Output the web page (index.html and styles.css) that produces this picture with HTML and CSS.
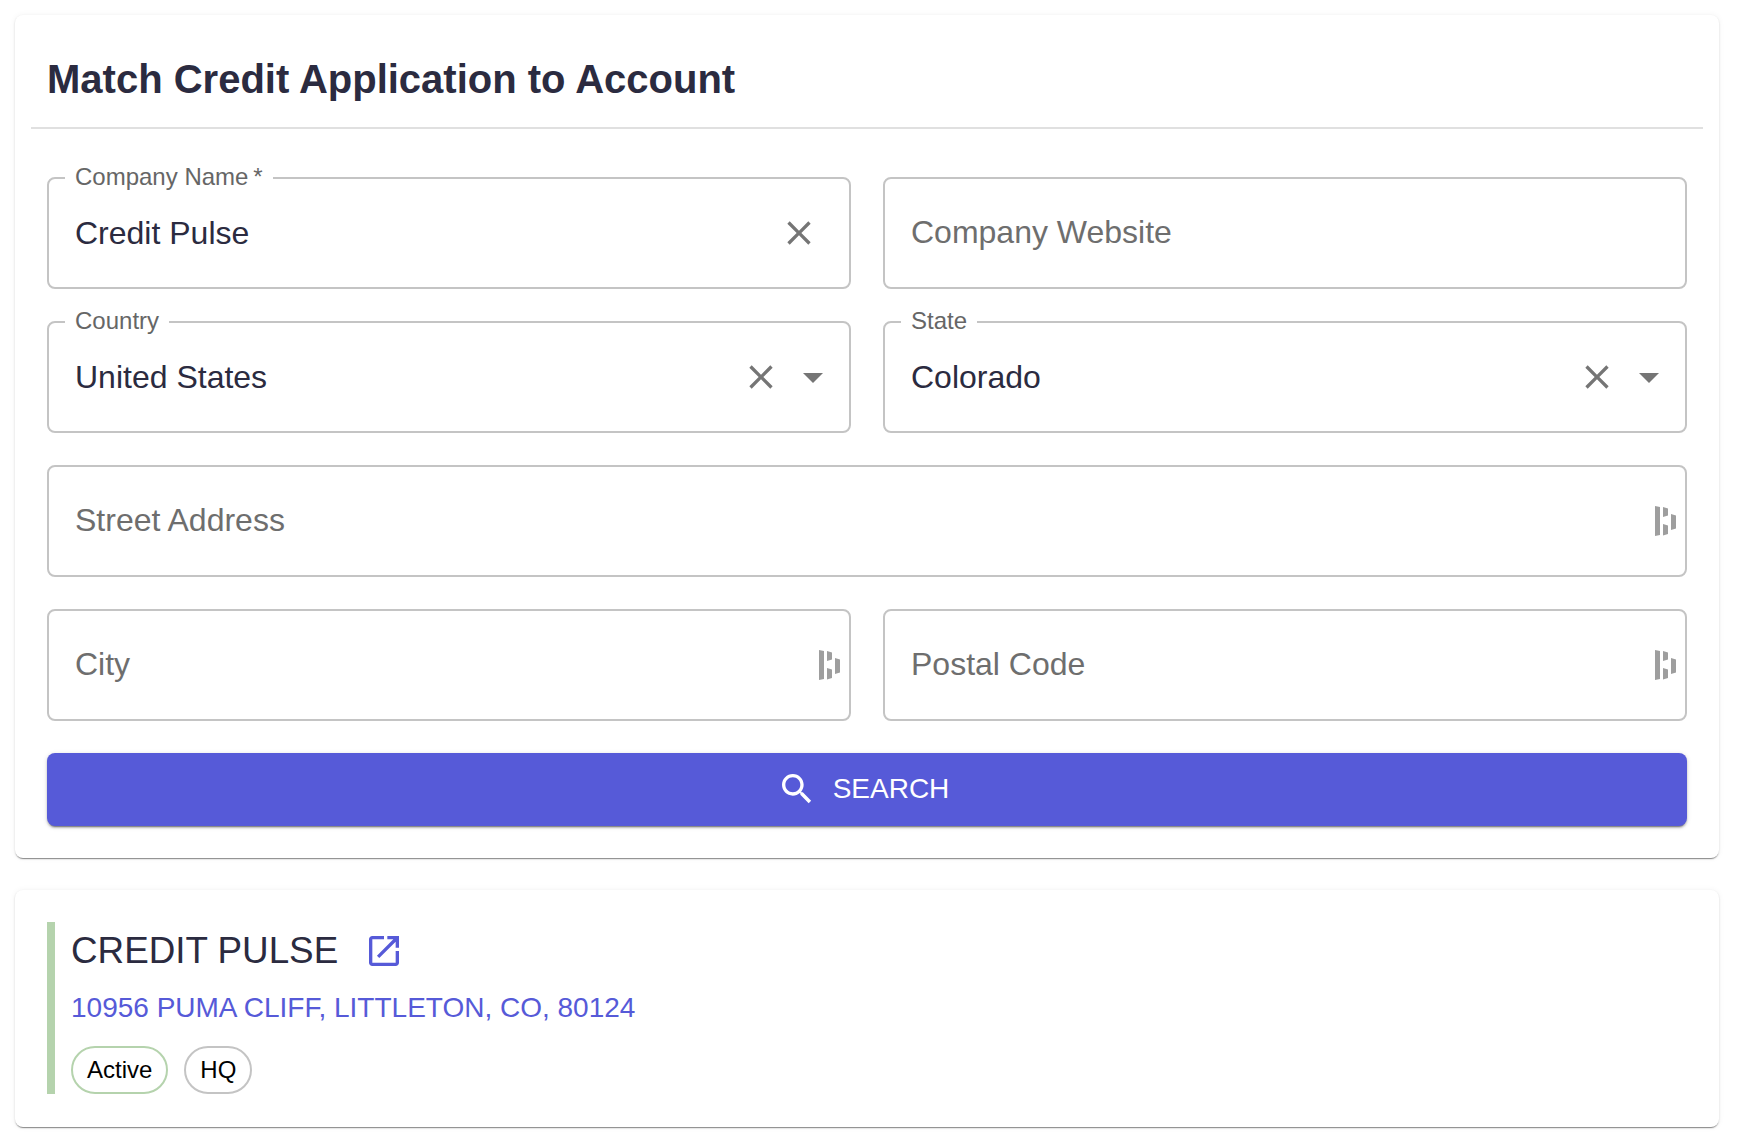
FILE: index.html
```html
<!DOCTYPE html>
<html lang="en">
<head>
<meta charset="utf-8">
<title>Match Credit Application to Account</title>
<link rel="stylesheet" href="styles.css">
</head>
<body>
<main class="page">
  <section class="card form-card">
    <h1 class="title">Match Credit Application to Account</h1>
    <hr class="divider">
    <form class="form-grid">
      <div class="field">
        <span class="label">Company Name&thinsp;*</span>
        <span class="value">Credit Pulse</span>
        <span class="adorn adorn-single">
          <svg class="close" viewBox="0 0 24 24"><path d="M19 6.41 17.59 5 12 10.59 6.41 5 5 6.41 10.59 12 5 17.59 6.41 19 12 13.41 17.59 19 19 17.59 13.41 12z"/></svg>
        </span>
      </div>
      <div class="field">
        <span class="placeholder">Company Website</span>
      </div>
      <div class="field">
        <span class="label">Country</span>
        <span class="value">United States</span>
        <span class="adorn">
          <svg class="close" viewBox="0 0 24 24"><path d="M19 6.41 17.59 5 12 10.59 6.41 5 5 6.41 10.59 12 5 17.59 6.41 19 12 13.41 17.59 19 19 17.59 13.41 12z"/></svg>
          <svg class="arrow" viewBox="0 0 24 24"><path d="M7 10l5 5 5-5z"/></svg>
        </span>
      </div>
      <div class="field">
        <span class="label">State</span>
        <span class="value">Colorado</span>
        <span class="adorn">
          <svg class="close" viewBox="0 0 24 24"><path d="M19 6.41 17.59 5 12 10.59 6.41 5 5 6.41 10.59 12 5 17.59 6.41 19 12 13.41 17.59 19 19 17.59 13.41 12z"/></svg>
          <svg class="arrow" viewBox="0 0 24 24"><path d="M7 10l5 5 5-5z"/></svg>
        </span>
      </div>
      <div class="field field-wide">
        <span class="placeholder">Street Address</span>
        <svg class="dash" viewBox="0 0 21 30"><path d="M0 0l5 1v28l-5 1zM8 1l5 1.500v7L8 11zM8 18l5 1.500v8.500l-5 1.500zM16 8l5 1.500v13L16 24z"/></svg>
      </div>
      <div class="field">
        <span class="placeholder">City</span>
        <svg class="dash" viewBox="0 0 21 30"><path d="M0 0l5 1v28l-5 1zM8 1l5 1.500v7L8 11zM8 18l5 1.500v8.500l-5 1.500zM16 8l5 1.500v13L16 24z"/></svg>
      </div>
      <div class="field">
        <span class="placeholder">Postal Code</span>
        <svg class="dash" viewBox="0 0 21 30"><path d="M0 0l5 1v28l-5 1zM8 1l5 1.500v7L8 11zM8 18l5 1.500v8.500l-5 1.500zM16 8l5 1.500v13L16 24z"/></svg>
      </div>
      <button class="search-btn" type="button">
        <svg class="search-icon" viewBox="0 0 24 24"><path d="M15.500 14h-.79l-.28-.27C15.410 12.590 16 11.110 16 9.500 16 5.910 13.090 3 9.500 3S3 5.910 3 9.500 5.910 16 9.500 16c1.610 0 3.090-.59 4.230-1.570l.27.28v.79l5 4.990L20.490 19l-4.990-5zm-6 0C7.010 14 5 11.990 5 9.500S7.010 5 9.500 5 14 7.010 14 9.500 11.990 14 9.500 14z"/></svg>
        <span>SEARCH</span>
      </button>
    </form>
  </section>

  <section class="card result-card">
    <div class="result">
      <div class="result-head">
        <span class="result-name">CREDIT PULSE</span>
        <svg class="open-icon" viewBox="0 0 24 24"><path d="M19 19H5V5h7V3H5c-1.110 0-2 .9-2 2v14c0 1.100.89 2 2 2h14c1.100 0 2-.9 2-2v-7h-2v7zM14 3v2h3.590l-9.830 9.830 1.410 1.410L19 6.410V10h2V3h-7z"/></svg>
      </div>
      <div class="result-address">10956 PUMA CLIFF, LITTLETON, CO, 80124</div>
      <div class="chips">
        <span class="chip chip-active">Active</span>
        <span class="chip">HQ</span>
      </div>
    </div>
  </section>
</main>
</body>
</html>
```

FILE: styles.css
```css
* { box-sizing: border-box; }
html, body { margin: 0; padding: 0; background: #fff; }
body { font-family: "Liberation Sans", Arial, sans-serif; color: #2b2b40; }
.page { display: flex; flex-direction: column; gap: 32px; padding: 15px 27px 19px 15px; }
.card {
  background: #fff;
  border-radius: 8px;
  box-shadow: 0 2px 1px -1px rgba(0,0,0,.36), 0 1px 2px 0 rgba(0,0,0,.16), 0 0 6px 0 rgba(0,0,0,.05);
}
.form-card { padding: 0 16px 32px; height: 843px; }
.title { margin: 0; padding: 41px 16px 0; height: 112px; font-size: 40px; line-height: 46px; font-weight: 700; }
.divider { margin: 0; height: 2px; border: 0; background: #e0e0e0; }
.form-grid {
  display: grid;
  grid-template-columns: 1fr 1fr;
  gap: 32px;
  padding: 48px 16px 0;
}
.field {
  position: relative;
  display: flex;
  align-items: center;
  height: 112px;
  padding: 0 26px;
  border: 2px solid #c4c4c4;
  border-radius: 8px;
  font-size: 32px;
}
.field-wide, .search-btn { grid-column: 1 / -1; }
.label {
  position: absolute;
  top: -16px;
  left: 16px;
  padding: 0 10px;
  background: #fff;
  font-size: 24px;
  line-height: 28px;
  color: #666;
}
.value { flex: 1; color: #2b2b40; }
.placeholder { flex: 1; padding-bottom: 2px; color: #6e6e6e; }
.adorn { display: flex; align-items: center; gap: 8px; margin-right: -14px; }
.adorn-single { margin-right: 4px; }
.close { width: 40px; height: 40px; fill: #757575; }
.arrow { width: 48px; height: 48px; fill: #757575; }
.dash { position: absolute; right: 9px; top: 39px; width: 21px; height: 30px; fill: #9e9e9e; }
.search-btn {
  display: flex;
  align-items: center;
  justify-content: center;
  gap: 16px;
  height: 73px;
  padding: 0 8px 2px 0;
  border: 0;
  border-radius: 8px;
  background: #565ad8;
  color: #fff;
  font-family: inherit;
  font-size: 28px;
  box-shadow: 0 3px 1px -2px rgba(0,0,0,.3), 0 2px 2px 0 rgba(0,0,0,.2), 0 1px 5px 0 rgba(0,0,0,.14);
}
.search-icon { width: 40px; height: 40px; fill: #fff; }
.result-card { padding: 32px; height: 237px; }
.result { height: 172px; border-left: 8px solid #b5d3ad; padding-left: 16px; display: flex; flex-direction: column; }
.result-head { display: flex; align-items: center; gap: 26px; height: 58px; }
.result-name { font-size: 36.800px; line-height: 44px; color: #2b2b40; }
.open-icon { width: 40px; height: 40px; fill: #565ad8; }
.result-address { margin-top: 8px; font-size: 28px; line-height: 40px; color: #565ad8; }
.chips { display: flex; gap: 16px; margin-top: auto; }
.chip {
  display: flex;
  align-items: center;
  height: 48px;
  padding: 0 14px;
  border: 2px solid #c4c4c4;
  border-radius: 24px;
  font-size: 24px;
  color: #000;
}
.chip-active { border-color: #b5d3ad; }
```
